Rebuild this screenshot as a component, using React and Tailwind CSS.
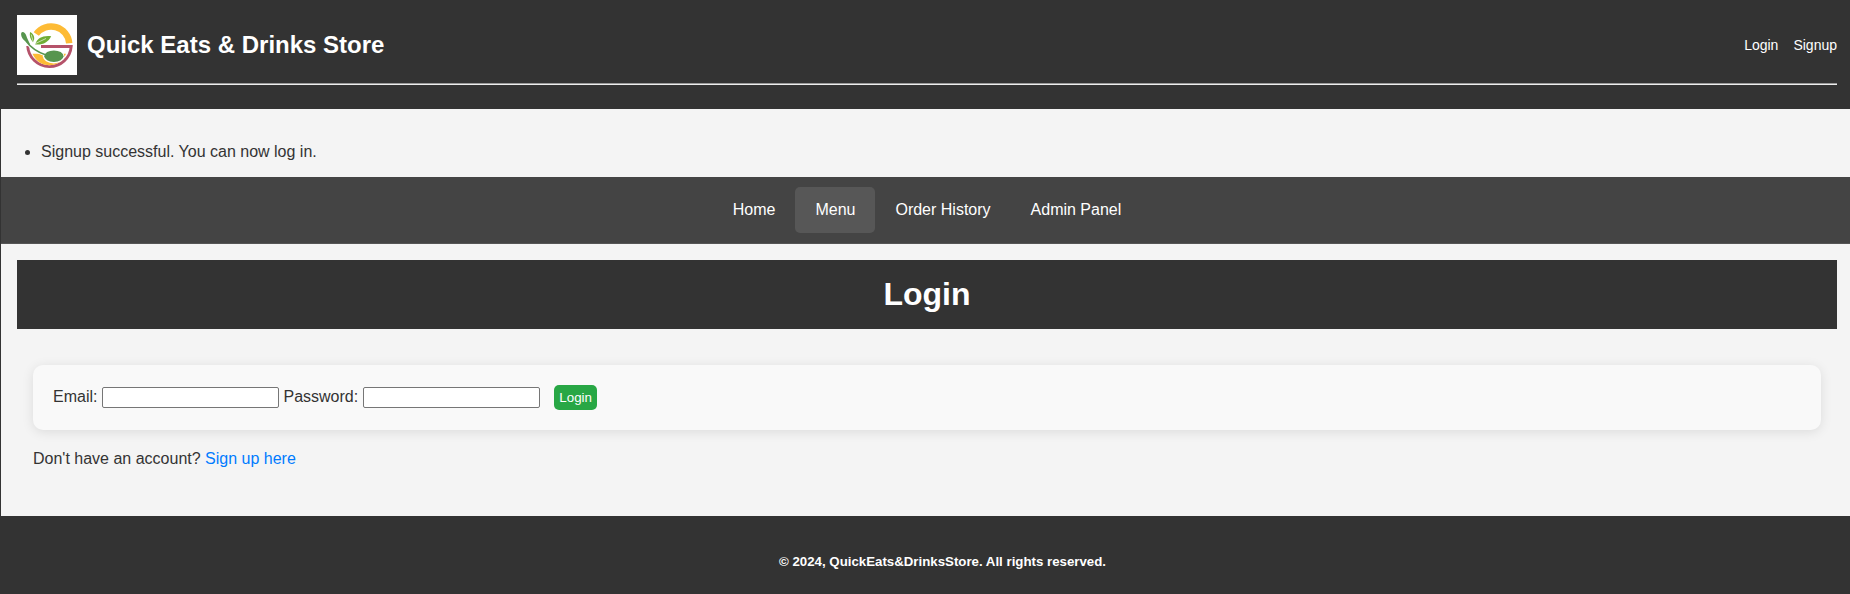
const navItems = [
  { label: "Home" },
  { label: "Menu", active: true },
  { label: "Order History" },
  { label: "Admin Panel" },
];

function Logo() {
  return (
    <svg className="h-[60px] w-[60px] bg-white" viewBox="0 0 60 60" fill="none">
      <path d="M19.3 19A18.2 18.2 0 0 1 52.2 28.2" stroke="#fdbb35" strokeWidth="6.4" />
      <path d="M24 31.5H54.2A21.8 21.8 0 0 1 10.7 31" stroke="#b5526a" strokeWidth="2.9" />
      <path d="M15.5 38.8H49C46 46 40 50.3 32.4 50.3S18.5 46 15.5 38.8Z" fill="#fdbb35" />
      <path d="M9 26C14 33 20 37 29 40" stroke="#fff" strokeWidth="3.4" />
      <ellipse cx="36.7" cy="41.2" rx="10.8" ry="7.2" fill="#fff" />
      <ellipse cx="36.9" cy="41.2" rx="9.6" ry="5.8" fill="#57954e" />
      <path d="M9 26C14 33 20 37 29 40" stroke="#57954e" strokeWidth="1.5" />
      <path d="M4.2 18C5.2 16 8.2 17 9.2 20.5C10.2 24 11.5 25.5 13.2 29.5C8.5 27 3.2 23 4.2 18Z" fill="#57954e" />
      <path d="M13 17C12.4 20.5 13 24.2 16 27.2C18.6 23.2 16.8 19 13 17Z" fill="#70ad35" />
      <path d="M18.2 29.4C20 23 26 20.2 34.2 21.2C31 27.5 25.5 30.2 18.2 29.4Z" fill="#70ad35" />
      <path d="M14.2 19.5L16.3 26.8M18.5 28.5L29 23.5" stroke="#fff" strokeWidth=".6" />
    </svg>
  );
}

export default function App() {
  return (
    <div className="h-[594px] w-full overflow-hidden bg-[#333] pl-px font-['Liberation_Sans',Arial,sans-serif] text-base text-[#333]">
      <div className="flex h-full w-[1852px] flex-col bg-[#f4f4f4]">
        <header className="h-[109px] shrink-0 bg-[#333] px-4 pt-[15px] text-white">
          <div className="flex h-[60px] items-center justify-between">
            <div className="flex items-center gap-2.5">
              <Logo />
              <h1 className="text-2xl font-bold">Quick Eats &amp; Drinks Store</h1>
            </div>
            <div className="flex gap-[15px] text-sm">
              <a>Login</a>
              <a>Signup</a>
            </div>
          </div>
          <div className="mt-2 h-0.5 border-t border-b border-t-[#9a9a9a] border-b-[#eee]" />
        </header>

        <ul className="h-[68px] shrink-0 list-disc pt-[31px] pl-10 leading-6">
          <li>Signup successful. You can now log in.</li>
        </ul>

        <nav className="flex h-[67px] shrink-0 justify-center border-b border-[#555] bg-[#444] pt-2.5 text-white">
          {navItems.map((item) => (
            <a
              key={item.label}
              className={
                item.active
                  ? "h-[46px] rounded-[5px] bg-[#575757] px-5 leading-[45px]"
                  : "h-[46px] px-5 leading-[45px]"
              }
            >
              {item.label}
            </a>
          ))}
        </nav>

        <main className="h-[272px] shrink-0 px-4 pt-4">
          <h2 className="h-[69px] bg-[#333] pt-2.5 text-center text-[32px] leading-[48px] font-bold text-white">
            Login
          </h2>
          <div className="px-4 pt-9">
            <form className="flex h-[65px] items-start rounded-[10px] bg-[#f9f9f9] px-5 pt-5 shadow-[0_2px_12px_rgba(0,0,0,0.1)]">
              <label className="leading-6">Email:</label>
              <input
                type="text"
                className="mt-[2px] ml-[5px] h-[21px] w-[177px] rounded-[2px] border border-[#767676] bg-white"
              />
              <label className="ml-[4px] leading-6">Password:</label>
              <input
                type="password"
                className="mt-[2px] ml-[5px] h-[21px] w-[177px] rounded-[2px] border border-[#767676] bg-white"
              />
              <button
                type="button"
                className="ml-[14px] h-[25px] w-[43px] rounded-[5px] bg-[#28a745] text-[13.333px] leading-[25px] text-white"
              >
                Login
              </button>
            </form>
            <p className="mt-[17px] leading-6">
              Don't have an account? <a className="text-[#007bff]">Sign up here</a>
            </p>
          </div>
        </main>

        <footer className="flex-1 bg-[#333] pt-9 pl-[31px] text-center text-[13.28px] leading-5 font-bold text-white">
          © 2024, QuickEats&amp;DrinksStore. All rights reserved.
        </footer>
      </div>
    </div>
  );
}
